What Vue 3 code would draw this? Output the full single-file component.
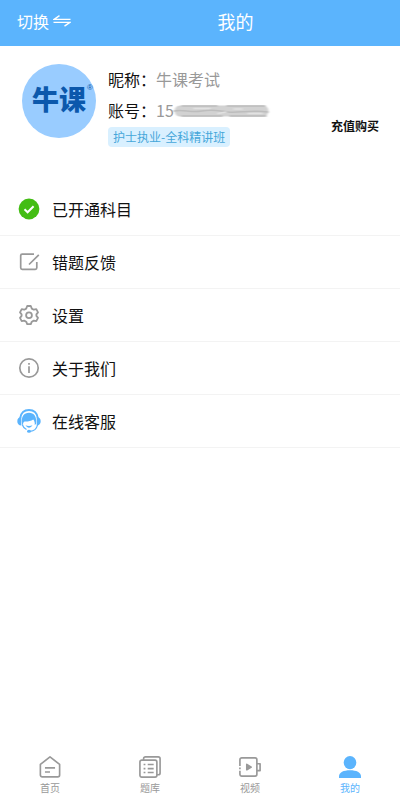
<script setup>
const menu = [
  { id: 'subjects', label: '已开通科目' },
  { id: 'feedback', label: '错题反馈' },
  { id: 'settings', label: '设置' },
  { id: 'about', label: '关于我们' },
  { id: 'service', label: '在线客服' }
]
const tabs = [
  { id: 'home', label: '首页' },
  { id: 'bank', label: '题库' },
  { id: 'video', label: '视频' },
  { id: 'mine', label: '我的' }
]
</script>

<template>
  <div class="page">
    <header class="header">
      <button class="switch" type="button">
        <span>切换</span>
        <svg width="18" height="12" viewBox="0 0 18 12" fill="none" stroke="currentColor" stroke-width="1.4">
          <path d="M6.5 0.7 1 4.4H17.5M0.5 7.4H17L11.5 11.2" />
        </svg>
      </button>
      <h1 class="title">我的</h1>
    </header>

    <main class="main">
      <section class="profile">
        <div class="avatar">
          <span class="brand">牛课</span>
          <span class="mark">®</span>
        </div>
        <div class="info">
          <p class="line">昵称：<span class="value">牛课考试</span></p>
          <p class="line">
            账号：<span class="value">15</span>
            <svg class="smudge" width="100" height="16" viewBox="0 0 100 16">
              <defs>
                <filter id="soft" x="-10%" y="-30%" width="120%" height="160%"><feGaussianBlur stdDeviation="1.3 0.7" /></filter>
              </defs>
              <g filter="url(#soft)" fill="none" stroke-linecap="round">
                <path d="M8 8H91" stroke="#d2d2d2" stroke-width="11" />
                <path d="M10 3H45M55 3H93" stroke="#bcbcbc" stroke-width="1.5" />
                <path d="M2 8C12 6 18 10 30 8S46 8 56 9 80 7 96 9" stroke="#bdbdbd" stroke-width="1.5" />
                <path d="M10 13H50M58 13H94" stroke="#bababa" stroke-width="1.5" />
                <path d="M22 5.500H38M46 10.500 54 9M62 6 70 6M76 10.500H90" stroke="#e2e2e2" stroke-width="1.500" />
              </g>
            </svg>
          </p>
          <span class="tag">护士执业-全科精讲班</span>
        </div>
        <button class="buy" type="button">充值购买</button>
      </section>

      <nav class="menu">
        <a v-for="item in menu" :key="item.id" class="row" href="#">
          <svg v-if="item.id === 'subjects'" class="icon" viewBox="0 0 24 24" fill="none">
            <circle cx="12" cy="12" r="10.4" fill="#43bd14" />
            <path d="m7.5 12.3 3.1 3 6-6" stroke="#fff" stroke-width="2" />
          </svg>
          <svg v-else-if="item.id === 'feedback'" class="icon" viewBox="0 0 24 24" fill="none" stroke="#999" stroke-width="1.7">
            <path d="M17 4.2H5.2a1.5 1.5 0 0 0-1.5 1.5v12.1a1.5 1.5 0 0 0 1.5 1.5h13.1a1.5 1.5 0 0 0 1.5-1.5V12M12 14.5 21.8 4.8" />
          </svg>
          <svg v-else-if="item.id === 'settings'" class="icon" viewBox="0 0 24 24" fill="none" stroke="#999" stroke-width="1.8" stroke-linejoin="round">
            <path d="M10.2 3h3.6l1 2.6 2 1.1 2.5-.5L21 9.4l-1.600 2v1.500l1.600 2-1.700 3.200-2.500-.5-2 1.100-1 2.500h-3.600l-1-2.500-2-1.100-2.500.5L3 14.900l1.600-2v-1.500L3 9.400l1.700-3.200 2.500.5 2-1.100z" />
            <circle cx="12" cy="12.2" r="2.9" />
          </svg>
          <svg v-else-if="item.id === 'about'" class="icon" viewBox="0 0 24 24" fill="none" stroke="#999" stroke-width="1.7">
            <circle cx="12" cy="12" r="9.2" />
            <path d="M12 10.3V17M12 7v1.8" />
          </svg>
          <svg v-else class="icon" viewBox="0 0 24 24" fill="none">
            <path d="M3.2 9C4 3.9 7.5 1 12 1s8 2.900 8.800 8" stroke="#5bb4fd" stroke-width="1.8" />
            <path d="M5 15C4 7.500 7 3.800 12 3.800S20 7.500 19 15l-1.300 1c.3-2.500-.2-4.200-1.500-5.600-2.400 1.700-5.700 2.200-8.700 2-1.300.7-1.700 2-1.300 3.800z" fill="#5bb4fd" />
            <path d="M4.3 8v8.500C1.700 16.400.3 15 .3 12.300S1.700 8.100 4.300 8zM19.700 8v8.500c2.600-.1 4-1.500 4-4.200s-1.400-4.200-4-4.300z" fill="#5bb4fd" />
            <path d="M20.500 16c-.8 3.800-3.500 6-7.500 6.400M5.200 15.500c.8 2.500 2 4 4.300 5" stroke="#5bb4fd" stroke-width="1.2" />
            <path d="M8.500 16.300c1.800 3.200 5.200 3.200 7 0-1.800.8-5.200.8-7 0z" fill="#5bb4fd" />
            <ellipse cx="12" cy="22.3" rx="2" ry="1.5" fill="#5bb4fd" />
          </svg>
          <span>{{ item.label }}</span>
        </a>
      </nav>
    </main>

    <nav class="tabs">
      <a v-for="tab in tabs" :key="tab.id" class="tab" :class="{ active: tab.id === 'mine' }" href="#">
        <svg class="tab-icon" viewBox="0 0 24 24" fill="none" stroke="currentColor" stroke-width="1.8" stroke-linejoin="round">
          <template v-if="tab.id === 'home'">
            <path d="M1.5 9.2 12 1l10.500 8.200v11.600a2 2 0 0 1-2 2h-17a2 2 0 0 1-2-2z" />
            <path d="M6.5 13h11M6.5 17.5H12" />
          </template>
          <template v-else-if="tab.id === 'bank'">
            <path d="M5 4.5V3a2 2 0 0 1 2-2h14a2 2 0 0 1 2 2v15.5a2 2 0 0 1-2 2h-1.5" />
            <rect x="1" y="4.5" width="18.5" height="18.5" rx="2" />
            <path d="M5 9.3h2M9.5 9.3H16M5 13.7h2M9.5 13.7H16M5 18h2M9.5 18H16" />
          </template>
          <template v-else-if="tab.id === 'video'">
            <path d="M1 11V4a2 2 0 0 1 2-2h14.5a2 2 0 0 1 2 2v16a2 2 0 0 1-2 2H3a2 2 0 0 1-2-2v-4M1 12.5v2M19.5 8.5H23V16h-3.5" />
            <path d="m8.5 9.2 4.8 2.9-4.8 2.900z" fill="currentColor" />
          </template>
          <template v-else>
            <ellipse cx="12" cy="7.2" rx="6.9" ry="7.2" fill="currentColor" stroke="none" />
            <path d="M0 24v-1.500C0 17.800 5 15.600 12 15.600s12 2.200 12 6.900V24z" fill="currentColor" stroke="none" />
          </template>
        </svg>
        <span>{{ tab.label }}</span>
      </a>
    </nav>
  </div>
</template>

<style>
body {
  background: #fff;
}
</style>

<style scoped>
.page {
  display: flex;
  flex-direction: column;
  min-height: 100vh;
  font-family: "Noto Sans CJK SC", sans-serif;
  color: #111;
}
button {
  border: 0;
  padding: 0;
  background: none;
  color: inherit;
  font-family: inherit;
}
a {
  color: inherit;
  text-decoration: none;
}
.header {
  display: flex;
  align-items: center;
  height: 46px;
  background: #5bb4fd;
  color: #fff;
}
.switch {
  display: flex;
  align-items: center;
  gap: 4px;
  padding: 0 0 4px 17px;
  font-size: 16px;
  line-height: 24px;
}
.title {
  flex: 1;
  margin: 0;
  padding-bottom: 4px;
  text-align: center;
  font-size: 18px;
  font-weight: 400;
  line-height: 26px;
}
.main {
  flex: 1;
}
.profile {
  display: flex;
  padding: 18px 21px 36px 22px;
}
.avatar {
  position: relative;
  display: flex;
  align-items: center;
  justify-content: center;
  width: 74px;
  height: 74px;
  border-radius: 50%;
  background: #99ccff;
  color: #0b58ac;
}
.brand {
  padding-bottom: 4px;
  font-size: 27px;
  font-weight: 900;
  line-height: 40px;
}
.mark {
  position: absolute;
  top: 20px;
  right: 3px;
  font-family: "Liberation Sans", sans-serif;
  font-size: 8px;
  line-height: 8px;
}
.info {
  flex: 1;
  padding-left: 12px;
}
.line {
  display: flex;
  align-items: center;
  margin: 0;
  font-size: 16px;
  line-height: 31px;
}
.value {
  color: #999;
}
.smudge {
  margin-left: -2px;
}
.tag {
  display: block;
  width: fit-content;
  margin-top: 1px;
  padding: 0 5px;
  border-radius: 4px;
  background: #d9f0ff;
  color: #46a7da;
  font-size: 12px;
  line-height: 20px;
}
.buy {
  align-self: flex-start;
  margin-top: 52px;
  font-size: 12px;
  font-weight: 700;
  line-height: 20px;
}
.row {
  display: flex;
  align-items: center;
  gap: 11px;
  height: 52px;
  padding: 0 17px;
  border-bottom: 1px solid #f3f3f3;
  font-size: 16px;
}
.icon {
  width: 24px;
  height: 24px;
}
.tabs {
  display: flex;
  padding: 0 0 4px;
}
.tab {
  flex: 1;
  display: flex;
  flex-direction: column;
  align-items: center;
  gap: 2px;
  color: #999;
  font-size: 10px;
  line-height: 16px;
}
.tab-icon {
  width: 22px;
  height: 22px;
}
.active {
  color: #5bb4fd;
}
</style>
